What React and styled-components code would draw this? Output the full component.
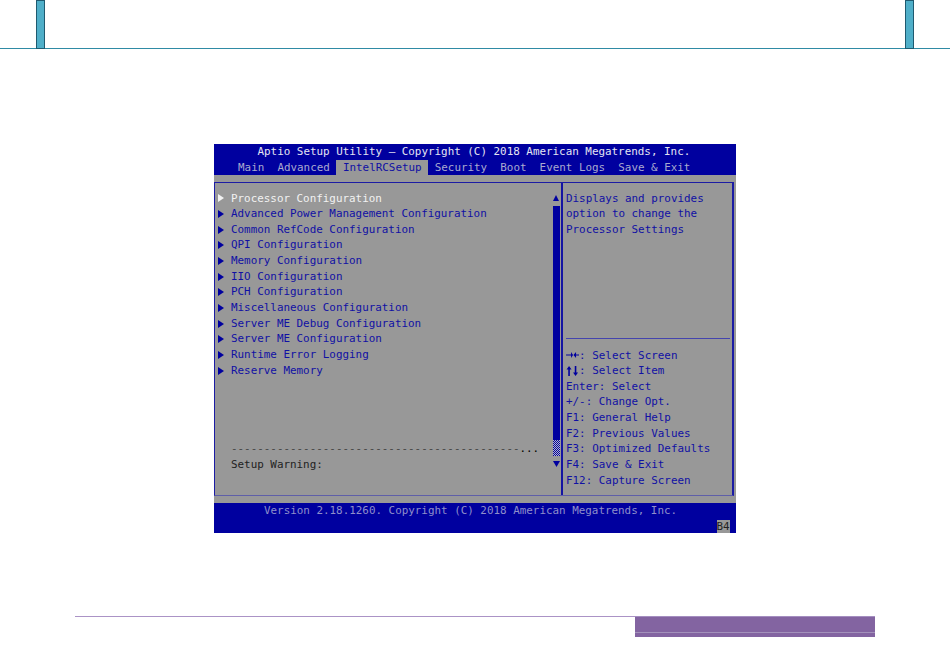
import React from "react";
import styled, { createGlobalStyle } from "styled-components";

const Global = createGlobalStyle`
  html, body { margin: 0; padding: 0; background: #fff; }
  body { width: 950px; height: 672px; overflow: hidden; }
`;

const ROW = 15.67;
const BLUE = "#00009f";
const GREY = "#989898";

const Page = styled.div`
  width: 950px;
  height: 672px;
  display: flex;
  flex-direction: column;
`;

const Header = styled.header`
  height: 48px;
  border-bottom: 1px solid #2f8ba5;
  display: flex;
  justify-content: space-between;
  padding: 0 36px;
  box-sizing: content-box;
`;

const Post = styled.div`
  width: 7px;
  height: 47px;
  background: #4fafc9;
  border: 1px solid #1f5a70;
`;

const Bios = styled.section`
  margin: 95px 0 0 214px;
  width: 522px;
  height: 389px;
  display: flex;
  flex-direction: column;
  background: ${GREY};
  font-family: "DejaVu Sans Mono", "Liberation Mono", monospace;
  font-size: 10.9px;
  line-height: ${ROW}px;
  color: #1010a4;
  white-space: pre;
`;

const TitleBar = styled.div`
  height: 16px;
  background: ${BLUE};
  color: #e4e4f2;
  padding-left: 43.5px;
`;

const Tabs = styled.nav`
  height: 15px;
  background: ${BLUE};
  display: flex;
  padding-left: 17.5px;
`;

const Tab = styled.span`
  padding: 0 1ch;
  color: ${(p) => (p.$active ? "#1010a4" : "#a9a9cf")};
  background: ${(p) => (p.$active ? GREY : "transparent")};
`;

const Panel = styled.div`
  margin: 7px 2px 0 0;
  height: 314px;
  box-sizing: border-box;
  display: flex;
  border: 1px solid #1c1ca4;
  border-bottom-color: #5f5fa8;
  border-right-width: 2px;
`;

const LeftPane = styled.div`
  width: 346px;
  flex: none;
  display: flex;
  padding: 7.5px 0 0 3px;
  box-sizing: border-box;
`;

const MenuColumn = styled.div`
  width: 334px;
  flex: none;
`;

const MenuRow = styled.div`
  display: flex;
  align-items: center;
  height: ${ROW}px;
  color: ${(p) => (p.$active ? "#f2f2f2" : "#1010a4")};
`;

const Pointer = styled.svg`
  width: 6px;
  height: 8px;
  margin-right: 7px;
  flex: none;
  fill: ${(p) => (p.$active ? "#f2f2f2" : BLUE)};
`;

const Separator = styled.div`
  margin: ${ROW * 4}px 0 0 13px;
  color: #444;
  height: ${ROW}px;
  overflow: hidden;
`;

const Dots = styled.span`
  color: #000;
`;

const Warning = styled.div`
  margin-left: 13px;
  color: #222;
`;

const ScrollColumn = styled.div`
  width: 7px;
  flex: none;
  display: flex;
  flex-direction: column;
  margin: 4.5px 0 0 1px;
`;

const ScrollArrow = styled.svg`
  width: 6px;
  height: 6px;
  flex: none;
  fill: ${BLUE};
`;

const ScrollThumb = styled.div`
  width: 7px;
  height: 234px;
  margin-top: 5px;
  background: ${BLUE};
`;

const ScrollRest = styled.div`
  width: 7px;
  height: 16px;
  background: repeating-conic-gradient(${BLUE} 0 25%, #b4b4c8 0 50%) 0 0 / 2px 2px;
`;

const ScrollArrowDown = styled(ScrollArrow)`
  margin-top: 5px;
  width: 7px;
`;

const RightPane = styled.aside`
  flex: 1;
  border-left: 2px solid #1414a2;
  padding: 7.5px 2px 0 3px;
  display: flex;
  flex-direction: column;
`;

const HelpText = styled.div`
  height: 148px;
  border-bottom: 1px solid #4444ae;
  box-sizing: border-box;
`;

const KeyList = styled.div`
  margin-top: 9px;
`;

const KeyRow = styled.div`
  height: ${ROW}px;
  display: flex;
  align-items: center;
`;

const KeyGlyph = styled.svg`
  width: 13.1px;
  height: 10px;
  flex: none;
  fill: ${BLUE};
`;

const Footer = styled.footer`
  flex: 1;
  margin-top: 7px;
  background: ${BLUE};
  color: #8f8fca;
  padding-left: 50px;
  display: flex;
  flex-direction: column;
`;

const Version = styled.div`
  height: ${ROW}px;
`;

const Badge = styled.span`
  align-self: flex-end;
  margin: 1px 6.5px 0 0;
  width: 13px;
  height: 13px;
  line-height: 14px;
  background: #989898;
  color: #222;
`;

const PurpleRule = styled.div`
  margin: 83px 0 0 75px;
  width: 800px;
  display: flex;
`;

const RuleLine = styled.div`
  flex: 1;
  height: 1px;
  background: #ab93c6;
`;

const RuleBlock = styled.div`
  width: 240px;
  height: 21px;
  box-sizing: border-box;
  background: #8364a1;
  border-top: 1px solid #a48ec0;
  padding-top: 15px;
  &::after {
    content: "";
    display: block;
    height: 1px;
    background: #a391bb;
  }
`;

const menu = [
  "Processor Configuration",
  "Advanced Power Management Configuration",
  "Common RefCode Configuration",
  "QPI Configuration",
  "Memory Configuration",
  "IIO Configuration",
  "PCH Configuration",
  "Miscellaneous Configuration",
  "Server ME Debug Configuration",
  "Server ME Configuration",
  "Runtime Error Logging",
  "Reserve Memory",
];

const tabs = ["Main", "Advanced", "IntelRCSetup", "Security", "Boot", "Event Logs", "Save & Exit"];

const LeftRight = () => (
  <KeyGlyph viewBox="0 0 13 10">
    <path d="M0 4.4h5V2l2 3-2 3V5.6H0zM13 4.4H10V2L7.4 5 10 8V5.6h3z" />
  </KeyGlyph>
);

const UpDown = () => (
  <KeyGlyph viewBox="0 0 13 10">
    <path d="M3 0 5.5 3.5H3.8V10H2.2V3.5H.5zM9.5 10 7 6.5h1.7V0h1.6v6.5H12z" />
  </KeyGlyph>
);

export default function App() {
  return (
    <Page>
      <Global />
      <Header>
        <Post />
        <Post />
      </Header>
      <Bios>
        <TitleBar>Aptio Setup Utility – Copyright (C) 2018 American Megatrends, Inc.</TitleBar>
        <Tabs>
          {tabs.map((t) => (
            <Tab key={t} $active={t === "IntelRCSetup"}>{t}</Tab>
          ))}
        </Tabs>
        <Panel>
          <LeftPane>
            <MenuColumn>
              {menu.map((m, i) => (
                <MenuRow key={m} $active={i === 0}>
                  <Pointer $active={i === 0} viewBox="0 0 6 8"><polygon points="0,0 6,4 0,8" /></Pointer>
                  {m}
                </MenuRow>
              ))}
              <Separator>{"-".repeat(44)}<Dots>...</Dots></Separator>
              <Warning>Setup Warning:</Warning>
            </MenuColumn>
            <ScrollColumn>
              <ScrollArrow viewBox="0 0 6 6"><polygon points="3,0 6,6 0,6" /></ScrollArrow>
              <ScrollThumb />
              <ScrollRest />
              <ScrollArrowDown viewBox="0 0 7 6"><polygon points="0,0 7,0 3.5,6" /></ScrollArrowDown>
            </ScrollColumn>
          </LeftPane>
          <RightPane>
            <HelpText>
              {"Displays and provides\noption to change the\nProcessor Settings"}
            </HelpText>
            <KeyList>
              <KeyRow><LeftRight />{": Select Screen"}</KeyRow>
              <KeyRow><UpDown />{": Select Item"}</KeyRow>
              <KeyRow>Enter: Select</KeyRow>
              <KeyRow>+/-: Change Opt.</KeyRow>
              <KeyRow>F1: General Help</KeyRow>
              <KeyRow>F2: Previous Values</KeyRow>
              <KeyRow>F3: Optimized Defaults</KeyRow>
              <KeyRow>F4: Save &amp; Exit</KeyRow>
              <KeyRow>F12: Capture Screen</KeyRow>
            </KeyList>
          </RightPane>
        </Panel>
        <Footer>
          <Version>Version 2.18.1260. Copyright (C) 2018 American Megatrends, Inc.</Version>
          <Badge>B4</Badge>
        </Footer>
      </Bios>
      <PurpleRule>
        <RuleLine />
        <RuleBlock />
      </PurpleRule>
    </Page>
  );
}
